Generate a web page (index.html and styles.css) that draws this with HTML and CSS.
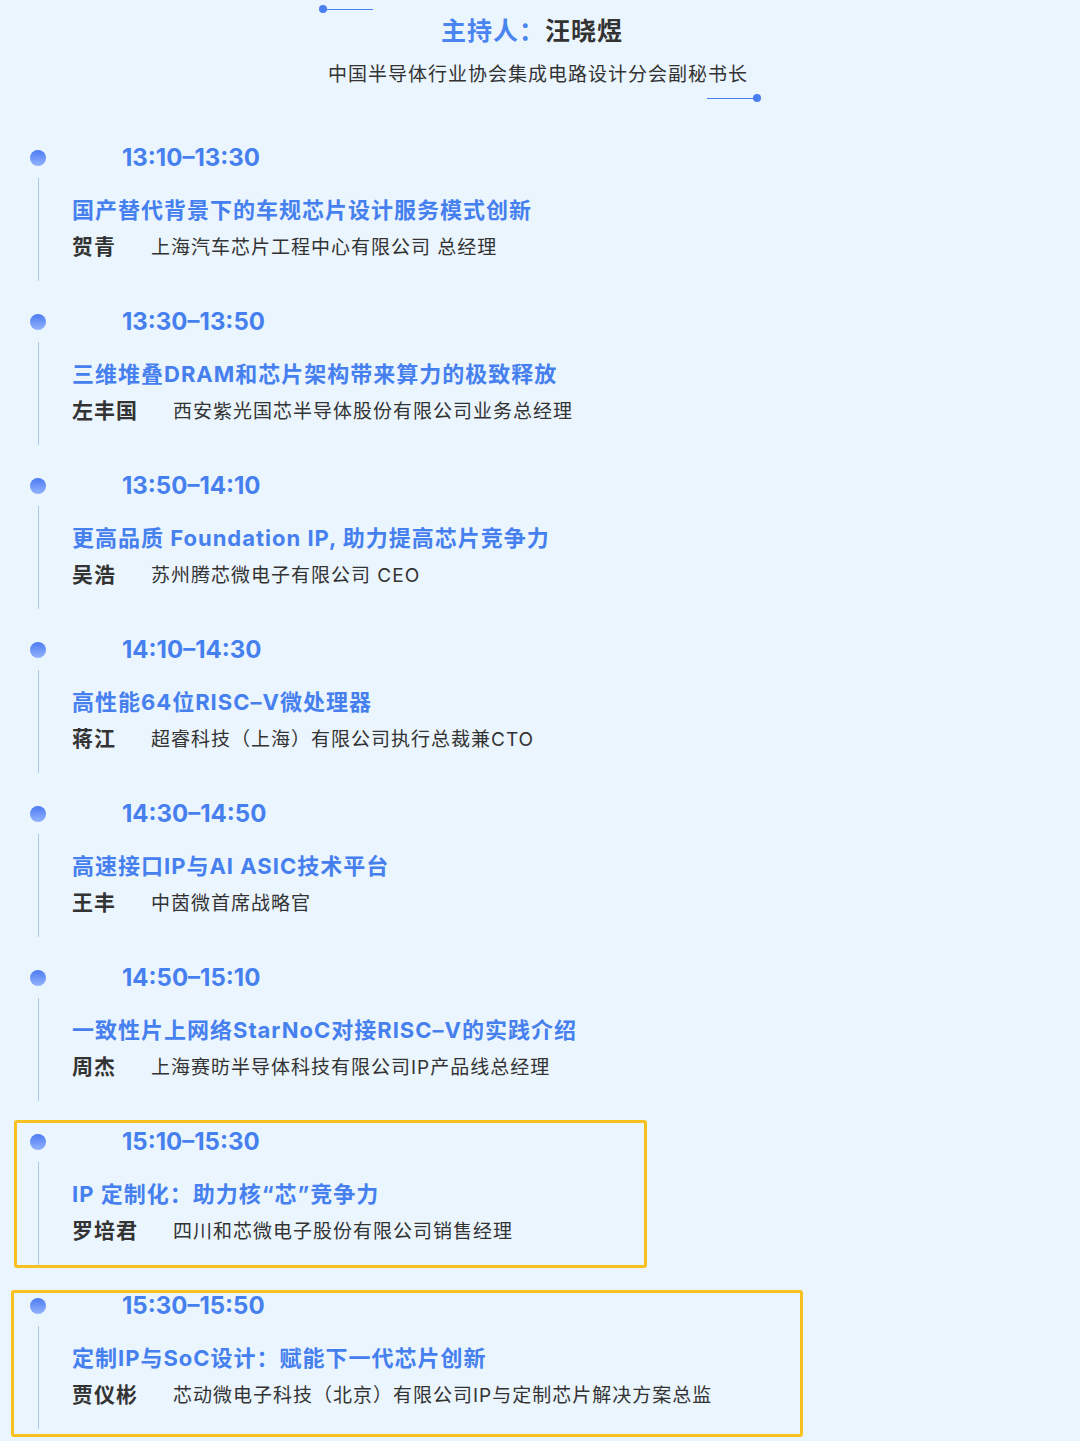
FILE: index.html
```html
<!DOCTYPE html>
<html lang="zh-CN">
<head>
    <meta charset="UTF-8">
    <meta name="viewport" content="width=device-width, initial-scale=1.0">
    <title>议程</title>
    <link rel="stylesheet" href="styles.css">
</head>
<body>
    <div class="host">
        <div class="deco deco-left"><span class="deco-dot"></span><span class="deco-line"></span></div>
        <h2 class="host-title"><span class="host-label">主持人：</span>汪晓煜</h2>
        <p class="host-desc">中国半导体行业协会集成电路设计分会副秘书长</p>
        <div class="deco deco-right"><span class="deco-line"></span><span class="deco-dot"></span></div>
    </div>

    <div class="agenda">
        <div class="item">
            <div class="rail"><span class="dot"></span><span class="line"></span></div>
            <div class="info">
                <div class="time">13:10–13:30</div>
                <div class="topic">国产替代背景下的车规芯片设计服务模式创新</div>
                <div class="speaker"><span class="name">贺青</span><span class="org">上海汽车芯片工程中心有限公司 总经理</span></div>
            </div>
        </div>

        <div class="item">
            <div class="rail"><span class="dot"></span><span class="line"></span></div>
            <div class="info">
                <div class="time">13:30–13:50</div>
                <div class="topic">三维堆叠DRAM和芯片架构带来算力的极致释放</div>
                <div class="speaker"><span class="name">左丰国</span><span class="org">西安紫光国芯半导体股份有限公司业务总经理</span></div>
            </div>
        </div>

        <div class="item">
            <div class="rail"><span class="dot"></span><span class="line"></span></div>
            <div class="info">
                <div class="time">13:50–14:10</div>
                <div class="topic">更高品质 Foundation IP, 助力提高芯片竞争力</div>
                <div class="speaker"><span class="name">吴浩</span><span class="org">苏州腾芯微电子有限公司 CEO</span></div>
            </div>
        </div>

        <div class="item">
            <div class="rail"><span class="dot"></span><span class="line"></span></div>
            <div class="info">
                <div class="time">14:10–14:30</div>
                <div class="topic">高性能64位RISC–V微处理器</div>
                <div class="speaker"><span class="name">蒋江</span><span class="org">超睿科技（上海）有限公司执行总裁兼CTO</span></div>
            </div>
        </div>

        <div class="item">
            <div class="rail"><span class="dot"></span><span class="line"></span></div>
            <div class="info">
                <div class="time">14:30–14:50</div>
                <div class="topic">高速接口IP与AI ASIC技术平台</div>
                <div class="speaker"><span class="name">王丰</span><span class="org">中茵微首席战略官</span></div>
            </div>
        </div>

        <div class="item">
            <div class="rail"><span class="dot"></span><span class="line"></span></div>
            <div class="info">
                <div class="time">14:50–15:10</div>
                <div class="topic">一致性片上网络StarNoC对接RISC–V的实践介绍</div>
                <div class="speaker"><span class="name">周杰</span><span class="org">上海赛昉半导体科技有限公司IP产品线总经理</span></div>
            </div>
        </div>

        <div class="item mark mark-a">
            <div class="rail"><span class="dot"></span><span class="line"></span></div>
            <div class="info">
                <div class="time">15:10–15:30</div>
                <div class="topic">IP 定制化：助力核“芯”竞争力</div>
                <div class="speaker"><span class="name">罗培君</span><span class="org">四川和芯微电子股份有限公司销售经理</span></div>
            </div>
        </div>

        <div class="item mark mark-b">
            <div class="rail"><span class="dot"></span><span class="line"></span></div>
            <div class="info">
                <div class="time">15:30–15:50</div>
                <div class="topic">定制IP与SoC设计：赋能下一代芯片创新</div>
                <div class="speaker"><span class="name">贾仪彬</span><span class="org">芯动微电子科技（北京）有限公司IP与定制芯片解决方案总监</span></div>
            </div>
        </div>
    </div>
</body>
</html>
```

FILE: styles.css
```css
html {
    background-color: #ebf5fe;
}

body {
    margin: 0;
    font-family: 'Inter', 'Noto Sans CJK SC', sans-serif;
    color: #333;
    background-color: #ebf5fe;
}

/* 主持人 */
.host {
    width: 436px;
    margin: 0 auto;
    padding-top: 5px;
    text-align: center;
}

.deco {
    display: flex;
    align-items: center;
    height: 8px;
}

.deco-left {
    margin-left: -3px;
}

.deco-right {
    justify-content: flex-end;
    margin-top: 5px;
    margin-right: -3px;
}

.deco-dot {
    width: 8px;
    height: 8px;
    border-radius: 50%;
    background-color: #4a7ff0;
}

.deco-line {
    width: 48px;
    height: 1px;
    background-color: #4a7ff0;
}

.deco-left .deco-line {
    margin-left: -2px;
}

.deco-right .deco-line {
    margin-right: -2px;
}

.host-title {
    margin: 1px 0 0;
    padding-right: 16px;
    font-size: 25px;
    line-height: 34px;
    letter-spacing: 1px;
    font-weight: 700;
    color: #333;
}

.host-label {
    color: #4a84f0;
}

.host-desc {
    margin: 13px 0 0;
    padding-right: 4px;
    font-size: 19px;
    line-height: 28px;
    letter-spacing: 1px;
}

/* 议程 */
.agenda {
    margin-top: 40px;
    padding: 0 30px;
}

.item {
    position: relative;
    display: flex;
    height: 164px;
}

.rail {
    display: flex;
    flex-direction: column;
    align-items: center;
    width: 16px;
    flex-shrink: 0;
}

.dot {
    width: 16px;
    height: 16px;
    margin-top: 8px;
    border-radius: 50%;
    background: linear-gradient(180deg, #4b7bf4 0%, #93b3fb 100%);
}

.line {
    width: 1px;
    height: 103px;
    margin-top: 12px;
    background-color: #a8c9ea;
}

.info {
    margin-left: 26px;
}

.time {
    padding-left: 50px;
    font-size: 24px;
    line-height: 32px;
    font-weight: 700;
    color: #4680ef;
}

.topic {
    margin-top: 20px;
    font-size: 22px;
    line-height: 32px;
    letter-spacing: 1px;
    font-weight: 700;
    color: #4680ef;
    white-space: nowrap;
}

.speaker {
    display: flex;
    align-items: baseline;
    margin-top: 6px;
    line-height: 30px;
    white-space: nowrap;
}

.name {
    font-size: 21px;
    letter-spacing: 1px;
    font-weight: 700;
    color: #333;
}

.org {
    margin-left: 35px;
    font-size: 19px;
    letter-spacing: 1px;
    color: #333;
}

/* 黄色标注框 */
.mark::after {
    content: '';
    position: absolute;
    border: 3px solid #f8c21e;
    border-radius: 3px;
    box-sizing: border-box;
}

.mark-a::after {
    left: -16px;
    top: -6px;
    width: 633px;
    height: 148px;
}

.mark-b::after {
    left: -19px;
    top: 0;
    width: 792px;
    height: 147px;
}
```
